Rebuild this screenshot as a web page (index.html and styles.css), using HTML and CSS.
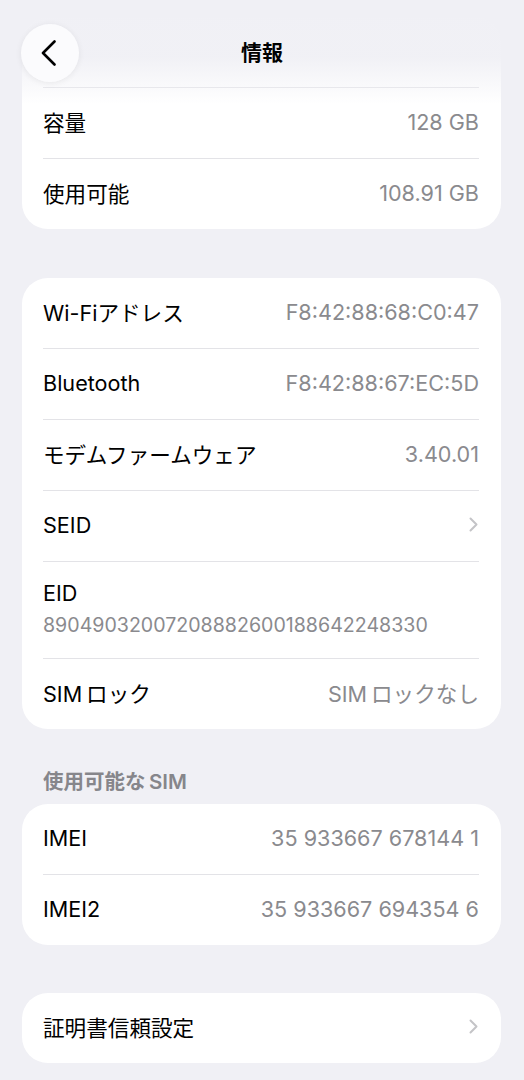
FILE: index.html
```html
<!DOCTYPE html>
<html lang="ja">
<head>
    <meta charset="UTF-8">
    <meta name="viewport" content="width=device-width, initial-scale=1">
    <title>情報</title>
    <link rel="stylesheet" href="styles.css">
</head>
<body>

    <div id="navBar">
        <button class="back-button" aria-label="戻る">
            <svg width="16" height="26" viewBox="0 0 16 26">
                <path d="M13.5 1.5 L2 13 L13.5 24.5" fill="none" stroke="#000" stroke-width="2.6" stroke-linecap="round" stroke-linejoin="round"/>
            </svg>
        </button>
        <h1 id="navTitle">情報</h1>
    </div>

    <div id="settingsList">

        <div class="group first-group">
            <div class="row hidden-row"></div>
            <div class="row">
                <span class="label">容量</span>
                <span class="value">128 GB</span>
            </div>
            <div class="row">
                <span class="label">使用可能</span>
                <span class="value">108.91 GB</span>
            </div>
        </div>

        <div class="group">
            <div class="row">
                <span class="label">Wi-Fiアドレス</span>
                <span class="value">F8:42:88:68:C0:47</span>
            </div>
            <div class="row">
                <span class="label">Bluetooth</span>
                <span class="value">F8:42:88:67:EC:5D</span>
            </div>
            <div class="row">
                <span class="label">モデムファームウェア</span>
                <span class="value">3.40.01</span>
            </div>
            <div class="row">
                <span class="label">SEID</span>
                <svg class="chevron" width="9" height="15" viewBox="0 0 9 15">
                    <path d="M1.5 1.5 L7.5 7.5 L1.5 13.5" fill="none" stroke="#c4c4c7" stroke-width="2" stroke-linecap="round" stroke-linejoin="round"/>
                </svg>
            </div>
            <div class="row stacked-row">
                <span class="label">EID</span>
                <span class="sub-value">89049032007208882600188642248330</span>
            </div>
            <div class="row">
                <span class="label">SIM&thinsp;ロック</span>
                <span class="value">SIM&thinsp;ロックなし</span>
            </div>
        </div>

        <h2 class="group-header">使用可能な&thinsp;SIM</h2>
        <div class="group no-gap">
            <div class="row">
                <span class="label">IMEI</span>
                <span class="value">35 933667 678144 1</span>
            </div>
            <div class="row">
                <span class="label">IMEI2</span>
                <span class="value">35 933667 694354 6</span>
            </div>
        </div>

        <div class="group last-group">
            <div class="row">
                <span class="label">証明書信頼設定</span>
                <svg class="chevron" width="9" height="15" viewBox="0 0 9 15">
                    <path d="M1.5 1.5 L7.5 7.5 L1.5 13.5" fill="none" stroke="#c4c4c7" stroke-width="2" stroke-linecap="round" stroke-linejoin="round"/>
                </svg>
            </div>
        </div>

    </div>

</body>
</html>
```

FILE: styles.css
```css
body {
    margin: 0;
    background-color: #f0f0f5;
    font-family: 'Inter', 'Noto Sans CJK JP', sans-serif;
    color: #000;
}

#navBar {
    position: absolute;
    top: 0;
    left: 0;
    right: 0;
    height: 104px;
    background: linear-gradient(to bottom, #f0f0f5 0%, rgba(240, 240, 245, 0.95) 55%, rgba(240, 240, 245, 0.35) 84%, rgba(240, 240, 245, 0) 100%);
    z-index: 2;
}

.back-button {
    position: absolute;
    top: 24px;
    left: 21px;
    width: 58px;
    height: 58px;
    border: none;
    border-radius: 50%;
    background-color: rgba(251, 251, 253, 0.95);
    box-shadow: 0 1px 6px rgba(0, 0, 0, 0.07);
    display: flex;
    align-items: center;
    justify-content: center;
    padding: 0 3px 0 0;
}

#navTitle {
    margin: 0;
    padding-top: 40px;
    text-align: center;
    font-size: 21px;
    font-weight: 700;
    line-height: 26px;
}

#settingsList {
    padding: 17px 23px 0 22px;
}

.group {
    background-color: #fff;
    border-radius: 26px;
    padding: 0 22px 0 21px;
    margin-bottom: 49px;
}

.group.no-gap {
    margin-bottom: 48px;
}

.group.last-group {
    margin-bottom: 18px;
}

.row {
    display: flex;
    align-items: center;
    justify-content: space-between;
    height: 70px;
    padding-bottom: 3px;
    box-sizing: border-box;
    border-bottom: 1px solid #e3e3e7;
}

.row:last-child {
    border-bottom: none;
    height: 70px;
}

.group .row:not(:last-child) {
    height: 71px;
}

.label {
    font-size: 21.6px;
}

.value {
    font-size: 21.6px;
    color: #8a8a8e;
}

.chevron {
    margin-right: 1px;
}

.stacked-row {
    flex-direction: column;
    align-items: flex-start;
    justify-content: center;
    gap: 7px;
}

.group .stacked-row:not(:last-child) {
    height: 97px;
}

.sub-value {
    font-size: 19.6px;
    color: #8a8a8e;
}

.group-header {
    margin: -8px 0 10px 21px;
    font-size: 20.5px;
    font-weight: 600;
    line-height: 24px;
    color: #86868b;
}
```
